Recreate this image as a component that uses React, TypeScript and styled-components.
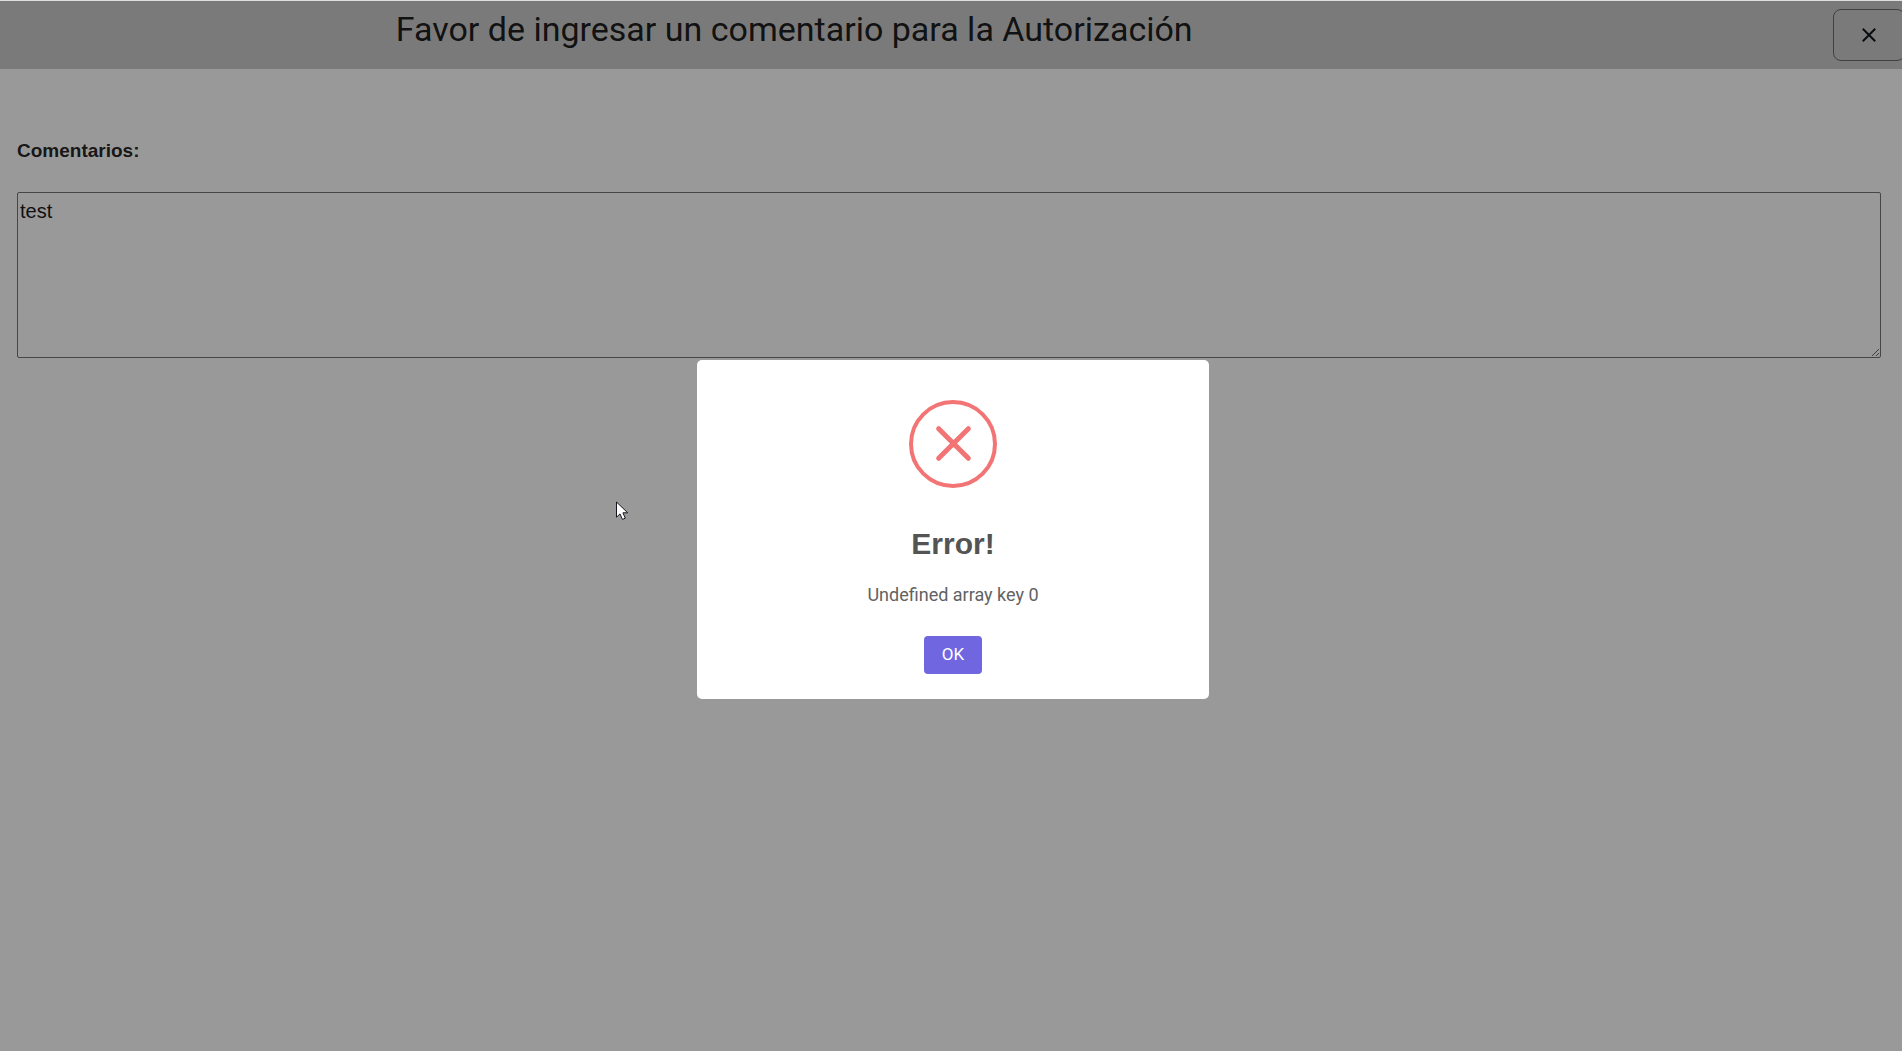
import React, { useState } from "react";
import styled, { createGlobalStyle } from "styled-components";

const GlobalStyle = createGlobalStyle`
  *, *::before, *::after { box-sizing: border-box; }
  body {
    margin: 0;
    overflow: hidden;
    background: #fff;
    color: rgba(0, 0, 0, 0.87);
    font-family: Roboto, "Liberation Sans", sans-serif;
  }
`;

const Page = styled.div`
  width: calc(100% + 4px);
  min-height: 100vh;
  border-top: 1px solid #dcdfde;
`;

const Header = styled.header`
  display: flex;
  align-items: flex-start;
  justify-content: space-between;
  height: 68px;
  background: #cbcbcb;
`;

const HeaderTitle = styled.h1`
  flex: 0 0 calc(100% * 10 / 12);
  margin: 0;
  padding-top: 8px;
  font-size: 34px;
  font-weight: 400;
  line-height: 40px;
  text-align: center;
`;

const CloseButton = styled.button`
  display: flex;
  align-items: center;
  justify-content: center;
  width: 72px;
  height: 52px;
  margin: 8px 1px 0 0;
  padding: 0;
  border: 1px solid #6b6b6b;
  border-radius: 8px;
  background: transparent;
  color: #10151c;
`;

const Form = styled.form`
  display: flex;
  flex-direction: column;
  gap: 30px;
  padding: 70px 25px 0 17px;
`;

const Label = styled.label`
  font-family: "Liberation Sans", Arial, sans-serif;
  font-size: 19px;
  font-weight: 700;
  line-height: 23px;
`;

const CommentBox = styled.textarea`
  width: 100%;
  height: 166px;
  padding: 6px 2px;
  border: 1px solid #767676;
  border-radius: 2px;
  background: #fff;
  color: #1c1c1c;
  font-family: "Liberation Sans", Arial, sans-serif;
  font-size: 20px;
  line-height: 24px;
  resize: vertical;
  outline: none;
`;

const Backdrop = styled.div`
  position: fixed;
  top: 1px;
  bottom: 0;
  left: 0;
  width: calc(100% + 4px);
  display: flex;
  align-items: center;
  justify-content: center;
  padding-top: 7px;
  background: rgba(0, 0, 0, 0.4);
`;

const Dialog = styled.section`
  display: flex;
  flex-direction: column;
  align-items: center;
  width: 512px;
  max-width: 100%;
  padding: 40px 0 25px;
  border-radius: 5px;
  background: #fff;
`;

const DialogTitle = styled.h2`
  margin: 39px 0 22px;
  color: #545454;
  font-family: "Liberation Sans", Arial, sans-serif;
  font-size: 30px;
  font-weight: 700;
  line-height: 34px;
`;

const DialogText = styled.p`
  margin: 0 0 29px;
  color: #626262;
  font-size: 18px;
  line-height: 24px;
`;

const ConfirmButton = styled.button`
  width: 58px;
  height: 38px;
  padding: 0 0 2px;
  border: 0;
  border-radius: 4px;
  background: #7066e0;
  color: #fff;
  font-family: inherit;
  font-size: 17px;
  line-height: 20px;
  outline: none;
`;

const Pointer = styled.svg`
  position: fixed;
  top: 501px;
  left: 616px;
  pointer-events: none;
`;

function CloseIcon() {
  return (
    <svg width="14" height="14" viewBox="0 0 14 14" fill="none" aria-hidden="true">
      <path d="M.8.8 13.2 13.2M13.2.8.8 13.2" stroke="currentColor" strokeWidth="2" />
    </svg>
  );
}

function ErrorIcon() {
  return (
    <svg width="88" height="88" viewBox="0 0 88 88" fill="none" stroke="#f27474" aria-hidden="true">
      <circle cx="44" cy="44" r="42" strokeWidth="4" />
      <path
        d="M29.65 28.65 59.35 58.35M59.35 28.65 29.65 58.35"
        strokeWidth="5"
        strokeLinecap="round"
      />
    </svg>
  );
}

export default function App() {
  const [comment, setComment] = useState("test");
  const [alertOpen, setAlertOpen] = useState(true);

  return (
    <>
      <GlobalStyle />
      <Page>
        <Header>
          <HeaderTitle>Favor de ingresar un comentario para la Autorización</HeaderTitle>
          <CloseButton type="button" aria-label="Cerrar">
            <CloseIcon />
          </CloseButton>
        </Header>
        <Form>
          <Label htmlFor="comentarios">Comentarios:</Label>
          <CommentBox
            id="comentarios"
            value={comment}
            onChange={(event) => setComment(event.target.value)}
          />
        </Form>
      </Page>
      {alertOpen && (
        <Backdrop>
          <Dialog role="alertdialog" aria-modal="true" aria-labelledby="alert-title" aria-describedby="alert-text">
            <ErrorIcon />
            <DialogTitle id="alert-title">Error!</DialogTitle>
            <DialogText id="alert-text">Undefined array key 0</DialogText>
            <ConfirmButton type="button" onClick={() => setAlertOpen(false)}>
              OK
            </ConfirmButton>
          </Dialog>
        </Backdrop>
      )}
      <Pointer width="13" height="20" viewBox="0 0 13 20" aria-hidden="true">
        <path
          d="M.5 1v15.2l3.5-3.3 2.4 5.5 2.9-1.2-2.4-5.4h4.8z"
          fill="#fff"
          stroke="#15151f"
          strokeLinejoin="round"
        />
      </Pointer>
    </>
  );
}
